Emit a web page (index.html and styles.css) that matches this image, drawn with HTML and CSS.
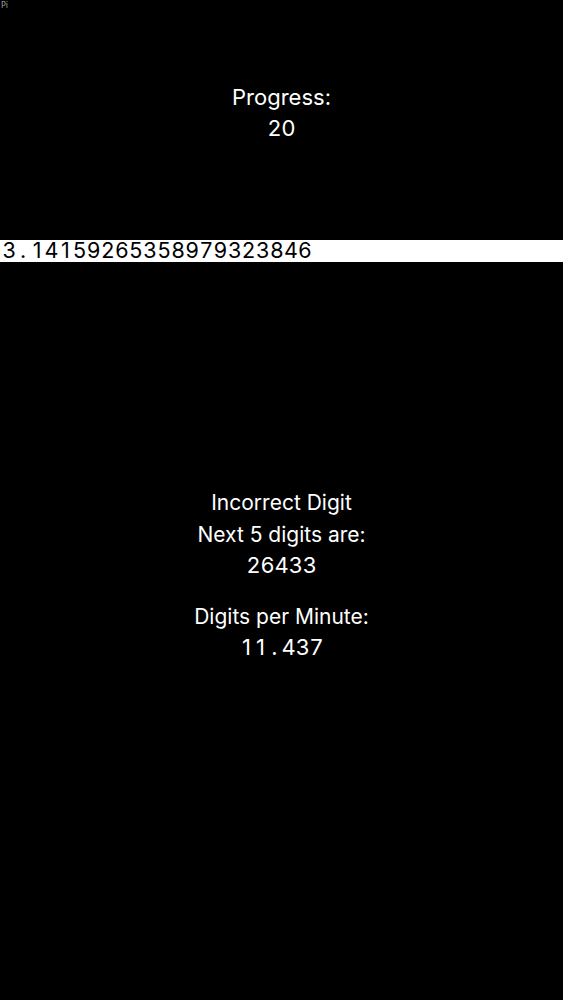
FILE: index.html
```html
<!DOCTYPE html>
<html>
<head>
<meta charset="utf-8">
<title>Pi</title>
<link rel="stylesheet" href="styles.css">
</head>
<body>
<div class="app">
  <div class="tag">Pi</div>
  <div class="progress">
    <div class="line">Progress:</div>
    <div class="line mono"><span>2</span><span>0</span></div>
  </div>
  <div class="pi-bar mono"><span>3</span><span>.</span><span>1</span><span>4</span><span>1</span><span>5</span><span>9</span><span>2</span><span>6</span><span>5</span><span>3</span><span>5</span><span>8</span><span>9</span><span>7</span><span>9</span><span>3</span><span>2</span><span>3</span><span>8</span><span>4</span><span>6</span></div>
  <div class="result">
    <div class="label">Incorrect Digit</div>
    <div class="label">Next 5 digits are:</div>
    <div class="num mono"><span>2</span><span>6</span><span>4</span><span>3</span><span>3</span></div>
  </div>
  <div class="speed">
    <div class="label">Digits per Minute:</div>
    <div class="num mono"><span>1</span><span>1</span><span>.</span><span>4</span><span>3</span><span>7</span></div>
  </div>
</div>
</body>
</html>
```
FILE: styles.css
```css
html, body {
  margin: 0;
  padding: 0;
  background: #000;
}
.app {
  width: 563px;
  min-height: 1000px;
  background: #000;
  color: #fff;
  font-family: "Inter", "Lato", sans-serif;
}
.tag {
  font-family: "DejaVu Sans", sans-serif;
  font-size: 8px;
  line-height: 10px;
  color: #9a9a9a;
  padding: 1px 0 0 1px;
  height: 11px;
}
.progress {
  margin-top: 70px;
  text-align: center;
}
.progress .line {
  font-size: 22px;
  line-height: 31px;
}
.progress .mono {
  font-size: 22px;
}
.mono span {
  display: inline-block;
  width: 14px;
  text-align: center;
}
.pi-bar {
  margin-top: 96px;
  background: #fff;
  color: #000;
  font-size: 21.5px;
  line-height: 21px;
  height: 21px;
  padding: 0 0 1px 2px;
  white-space: nowrap;
}
.pi-bar span {
  width: 14.1px;
}
.result {
  margin-top: 225px;
  text-align: center;
}
.label {
  font-size: 21px;
  line-height: 31px;
}
.result .label:nth-child(2) {
  margin-top: 1px;
}
.num {
  font-size: 22px;
  line-height: 31px;
}
.speed {
  margin-top: 20px;
  text-align: center;
}
```
